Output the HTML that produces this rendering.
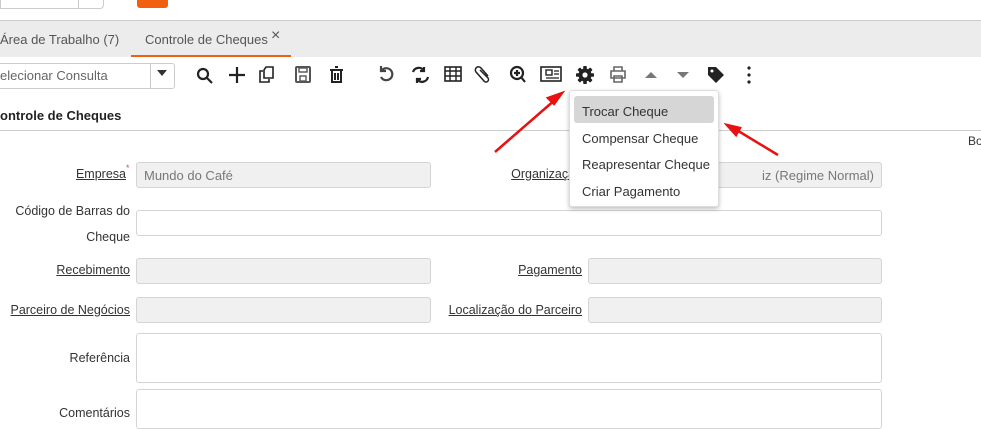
<!DOCTYPE html>
<html><head><meta charset="utf-8"><style>
*{box-sizing:border-box;margin:0;padding:0}
body{width:981px;height:418px;overflow:hidden;background:#fff;font-family:"Liberation Sans","DejaVu Sans",sans-serif;font-size:13px;color:#333;position:relative}
.a{position:absolute}
.lbl{position:absolute;text-align:right;font-size:12.5px;color:#333}
.u{text-decoration:underline}
.in{position:absolute;border:1px solid #d4d4d4;border-radius:3px;background:#f0f0f0;font-size:13px;color:#777;padding:5px 7px}
.w{background:#fff}
.mi{position:absolute;left:12px;font-size:13px;color:#333}
</style></head><body>
<div class="a" style="left:0;top:0;width:104px;height:9px;border:1px solid #ccc;border-top:0;border-radius:0 0 4px 0"></div>
<div class="a" style="left:78px;top:0;width:1px;height:9px;background:#ccc"></div>
<div class="a" style="left:137px;top:0;width:31px;height:8px;background:#f0600e;border-radius:0 0 3px 3px"></div>
<div class="a" style="left:0;top:20px;width:981px;height:37px;background:#ececec;border-top:1px solid #ccc"></div>
<div class="a" style="left:0;top:32px;font-size:13px;color:#555">Área de Trabalho (7)</div>
<div class="a" style="left:145px;top:32px;font-size:13px;color:#555">Controle de Cheques</div>
<div class="a" style="left:271px;top:27px;font-size:16px;color:#555">×</div>
<div class="a" style="left:131px;top:55px;width:160px;height:2px;background:#f0600e"></div>
<div class="a" style="left:-4px;top:63px;width:179px;height:26px;border:1px solid #ccc;border-radius:3px;background:#fff"></div>
<div class="a" style="left:0;top:68px;font-size:13px;color:#666">elecionar Consulta</div>
<div class="a" style="left:150px;top:63px;width:1px;height:26px;background:#ccc"></div>
<div class="a" style="left:157px;top:70px;width:0;height:0;border:5px solid transparent;border-top:6px solid #333"></div>
<svg class="a" style="left:190px;top:60px" width="580" height="30" viewBox="190 60 580 30" fill="none" stroke="#222" stroke-width="2.2">
<circle cx="203" cy="74" r="5"/><path d="M207 78l5 5"/>
<path d="M237 67v16M229 75h16"/>
<path d="M263 71h-3v11h9v-3M266 67h7v11h-9v-8z" stroke-width="1.6"/>
<rect x="296" y="67" width="14" height="15" rx="1" stroke="#555" stroke-width="2"/><rect x="299" y="68" width="8" height="4" stroke="#555" stroke-width="1.4"/><rect x="300" y="76" width="6" height="5" stroke="#555" stroke-width="1.4"/>
<path d="M330 70h13M332 70v12h9v-12M335 67h3M335 73v7M338 73v7" stroke-width="2"/>
<path d="M382 70a6 6 0 1 1 -1 7M381 66v5h5" stroke="#444"/>
<path d="M413 72a6 6 0 0 1 11 -1M428 77a6 6 0 0 1 -11 2M424 67v4h-4M417 83v-4h4"/>
<rect x="445" y="67" width="16" height="14" stroke-width="1.6"/><path d="M445 71h16M445 76h16M450 67v14M456 67v14" stroke-width="1.4"/>
<path d="M480 70l8 8a2 2 0 0 1 -4 3l-8 -9a3 3 0 0 1 5 -4l7 8" stroke-width="1.5"/>
<circle cx="517" cy="73" r="6"/><path d="M521 77l4 5M517 70v6M514 73h6"/>
<rect x="541" y="67" width="20" height="14" stroke-width="1.6"/><rect x="546" y="70" width="6" height="5" stroke-width="1.4"/><path d="M554 71h5M554 74h5M546 78h13" stroke-width="1.2"/>
<g transform="translate(585 75)" fill="#222" stroke="none">
<rect x="-1.8" y="-9" width="3.6" height="18" rx=".8"/><rect x="-1.8" y="-9" width="3.6" height="18" rx=".8" transform="rotate(45)"/><rect x="-1.8" y="-9" width="3.6" height="18" rx=".8" transform="rotate(90)"/><rect x="-1.8" y="-9" width="3.6" height="18" rx=".8" transform="rotate(135)"/>
<circle r="6.5"/><circle r="2.6" fill="#fff"/></g>
<path d="M611 71h14v7h-14zM614 71v-4h8v4M614 76h8v6h-8z" stroke="#666" stroke-width="1.6" fill="#fff"/>
<path d="M645 78l6 -6l6 6z" fill="#777" stroke="none"/>
<path d="M677 72l6 6l6 -6z" fill="#777" stroke="none"/>
<path d="M708 67h8l8 8l-8 8l-8 -8z" fill="#222" stroke="none"/><circle cx="712" cy="71" r="1.5" fill="#fff" stroke="none"/>
<circle cx="749" cy="68" r="1.6" fill="#222" stroke="none"/><circle cx="749" cy="75" r="1.6" fill="#222" stroke="none"/><circle cx="749" cy="82" r="1.6" fill="#222" stroke="none"/>
</svg>
<div class="a" style="left:0;top:108px;font-weight:bold;font-size:13px;color:#222">ontrole de Cheques</div>
<div class="a" style="left:0;top:130px;width:981px;height:1px;background:#ccc"></div>
<div class="a" style="left:968px;top:134px;font-size:12px">Bo</div>
<div class="lbl u" style="right:855px;top:167px">Empresa</div><div class="a" style="left:126px;top:163px;color:#e44;font-size:9px">*</div>
<div class="in" style="left:136px;top:162px;width:295px;height:26px">Mundo do Café</div>
<div class="lbl u" style="right:399px;top:167px">Organização</div>
<div class="in" style="left:588px;top:162px;width:294px;height:26px;text-align:right">iz (Regime Normal)</div>
<div class="lbl" style="right:851px;top:198px;line-height:26px">Código de Barras do<br>Cheque</div>
<div class="in w" style="left:136px;top:210px;width:746px;height:26px"></div>
<div class="lbl u" style="right:851px;top:263px">Recebimento</div>
<div class="in" style="left:136px;top:258px;width:295px;height:26px"></div>
<div class="lbl u" style="right:399px;top:263px">Pagamento</div>
<div class="in" style="left:588px;top:258px;width:294px;height:26px"></div>
<div class="lbl u" style="right:851px;top:303px">Parceiro de Negócios</div>
<div class="in" style="left:136px;top:297px;width:295px;height:26px"></div>
<div class="lbl u" style="right:399px;top:303px">Localização do Parceiro</div>
<div class="in" style="left:588px;top:297px;width:294px;height:26px"></div>
<div class="lbl" style="right:851px;top:351px">Referência</div>
<div class="in w" style="left:136px;top:333px;width:746px;height:50px"></div>
<div class="lbl" style="right:851px;top:406px">Comentários</div>
<div class="in w" style="left:136px;top:389px;width:746px;height:40px"></div>
<div class="a" style="left:569px;top:90px;width:150px;height:117px;background:#fff;border:1px solid #ddd;border-radius:3px;box-shadow:0 2px 5px rgba(0,0,0,.25)">
<div class="a" style="left:4px;top:5px;width:140px;height:27px;background:#d6d6d6;border-radius:3px"></div>
<div class="mi" style="top:13px">Trocar Cheque</div>
<div class="mi" style="top:40px">Compensar Cheque</div>
<div class="mi" style="top:66px">Reapresentar Cheque</div>
<div class="mi" style="top:93px">Criar Pagamento</div>
</div>
<svg class="a" style="left:0;top:0" width="981" height="418"><g stroke="#e81010" stroke-width="2.5" fill="#e81010">
<path d="M495 152L556 99"/><path d="M562 93l-14 5l6 6z"/>
<path d="M778 155L735 129"/><path d="M727 125l9 10l4 -7z"/></g></svg>
</body></html>
